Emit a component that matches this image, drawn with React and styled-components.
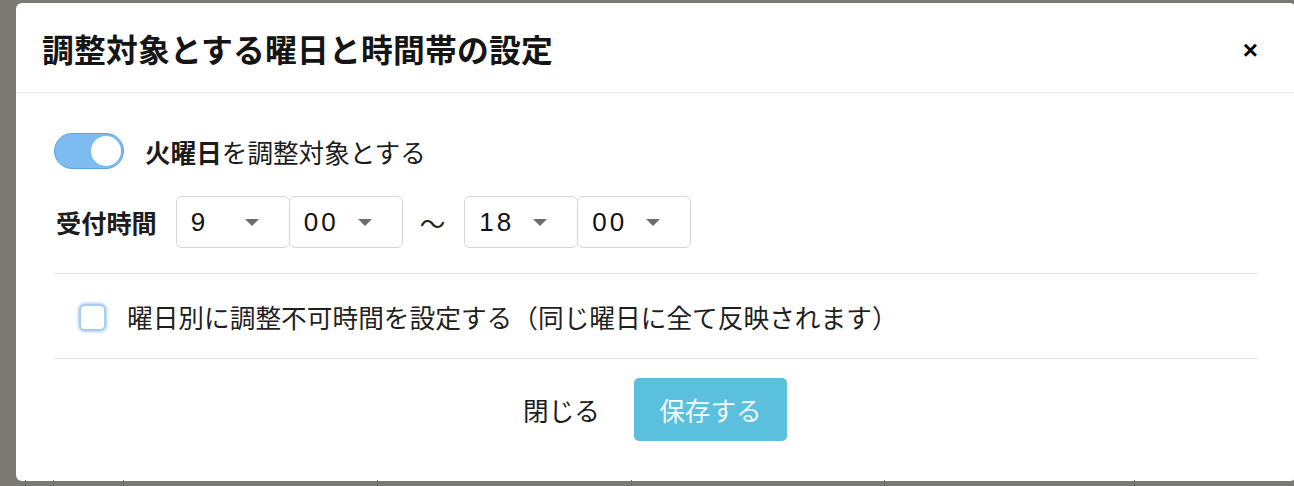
import React, { useState } from 'react'
import styled, { createGlobalStyle } from 'styled-components'

const GlobalStyle = createGlobalStyle`
html, body {
  margin: 0;
  padding: 0;
  background: #7a7974;
  overflow: hidden;
}
body {
  font-family: "Noto Sans CJK JP", "Noto Sans", sans-serif;
  color: #1c1c1c;
}
`;

const Page = styled.div`
width: 1294px;
height: 486px;
padding-top: 3px;
box-sizing: border-box;
`;

const Modal = styled.div`
margin-left: 16px;
width: 1280px;
height: 478px;
background: #fff;
border-radius: 6px;
display: flex;
flex-direction: column;
`;

const Header = styled.div`
height: 89px;
display: flex;
align-items: center;
justify-content: space-between;
padding: 0 38px 0 26px;
border-bottom: 1px solid #e6e6e6;
`;

const Title = styled.h2`
margin: 0;
font-size: 31.8px;
font-weight: 700;
color: #151515;
letter-spacing: 0.2px;
`;

const Close = styled.button`
border: none;
background: transparent;
padding: 0;
font-family: "Liberation Sans", sans-serif;
font-size: 26px;
font-weight: 700;
color: #000;
line-height: 1;
margin-top: 4px;
`;

const Body = styled.div`
padding: 40px 38px 0;
`;

const ToggleRow = styled.label`
display: flex;
align-items: center;
gap: 21px;
height: 36px;
font-size: 25.6px;
`;

const Track = styled.span`
width: 70px;
height: 36px;
box-sizing: border-box;
border-radius: 18px;
background: ${({ on }) => (on ? '#7dbbf0' : '#ccc')};
border: 1px solid ${({ on }) => (on ? '#5aa5e6' : '#bbb')};
display: flex;
align-items: center;
justify-content: ${({ on }) => (on ? 'flex-end' : 'flex-start')};
padding: 0 2px;
`;

const Knob = styled.span`
width: 30px;
height: 30px;
border-radius: 50%;
background: #fff;
`;

const Strong = styled.b`
font-weight: 700;
`;

const TimeRow = styled.div`
display: flex;
align-items: center;
margin-top: 27px;
margin-left: 2px;
`;

const RowLabel = styled.span`
font-size: 25.2px;
font-weight: 700;
margin-right: 20px;
`;

const Select = styled.div`
width: 114px;
height: 52px;
box-sizing: border-box;
border: 1px solid #d6d6d6;
border-radius: 6px;
display: flex;
align-items: center;
justify-content: space-between;
padding: 0 30px 0 14px;
font-family: "Liberation Sans", sans-serif;
font-size: 26px;
letter-spacing: 3px;
color: #111;
margin-left: -1px;
`;

const Caret = styled.span`
width: 0;
height: 0;
border-left: 7px solid transparent;
border-right: 7px solid transparent;
border-top: 7px solid #6b6d73;
`;

const Tilde = styled.span`
font-size: 25.6px;
margin: 0 20px 0 17px;
color: #222;
`;

const Divider = styled.hr`
border: none;
border-top: 1px solid #e6e6e6;
margin: ${({ top }) => top}px 0 0;
`;

const CheckRow = styled.label`
height: 84px;
display: flex;
align-items: center;
gap: 21px;
padding-left: 25px;
font-size: 25.7px;
color: #1f1f1f;
`;

const Box = styled.span`
width: 27px;
height: 27px;
box-sizing: border-box;
border-radius: 6px;
border: 2px solid #a9cdf2;
box-shadow: 0 0 3px 1px rgba(120, 175, 235, 0.6);
background: #fff;
margin-top: 2px;
`;

const Footer = styled.div`
display: flex;
justify-content: center;
align-items: center;
gap: 34px;
padding-top: 19px;
margin-right: 2px;
`;

const TextButton = styled.button`
border: none;
background: transparent;
font-family: inherit;
font-size: 25.6px;
color: #1c1c1c;
padding: 0;
`;

const PrimaryButton = styled.button`
width: 153px;
height: 63px;
border: none;
border-radius: 5px;
background: #5bc0de;
color: #f4fbfd;
font-family: inherit;
font-size: 25.6px;
`;

const BackRow = styled.div`
display: flex;
height: 6px;
margin-top: -1px;
`;

const BackCell = styled.div`
width: ${({ w }) => w}px;
border-left: 1px solid ${({ first }) => (first ? 'transparent' : '#6c6b67')};
`;

const hours = [
  { h: '9', m: '00' },
  { h: '18', m: '00' },
];

const TimeSelect = ({ value }) => (
  <Select>
    <span>{value}</span>
    <Caret />
  </Select>
);

const App = () => {
  const [on] = useState(true);
  return (
    <>
      <GlobalStyle />
      <Page>
        <Modal>
          <Header>
            <Title>調整対象とする曜日と時間帯の設定</Title>
            <Close>×</Close>
          </Header>
          <Body>
            <ToggleRow>
              <Track on={on ? 1 : 0}>
                <Knob />
              </Track>
              <span>
                <Strong>火曜日</Strong>を調整対象とする
              </span>
            </ToggleRow>
            <TimeRow>
              <RowLabel>受付時間</RowLabel>
              <TimeSelect value={hours[0].h} />
              <TimeSelect value={hours[0].m} />
              <Tilde>〜</Tilde>
              <TimeSelect value={hours[1].h} />
              <TimeSelect value={hours[1].m} />
            </TimeRow>
            <Divider top={25} />
            <CheckRow>
              <Box />
              曜日別に調整不可時間を設定する（同じ曜日に全て反映されます）
            </CheckRow>
            <Divider top={0} />
            <Footer>
              <TextButton>閉じる</TextButton>
              <PrimaryButton>保存する</PrimaryButton>
            </Footer>
          </Body>
        </Modal>
        <BackRow>
          <BackCell w={24} first />
          <BackCell w={27} />
          <BackCell w={70} />
          <BackCell w={254} />
          <BackCell w={254} />
          <BackCell w={254} />
          <BackCell w={250} />
          <BackCell w={160} />
        </BackRow>
      </Page>
    </>
  );
};

export default App
